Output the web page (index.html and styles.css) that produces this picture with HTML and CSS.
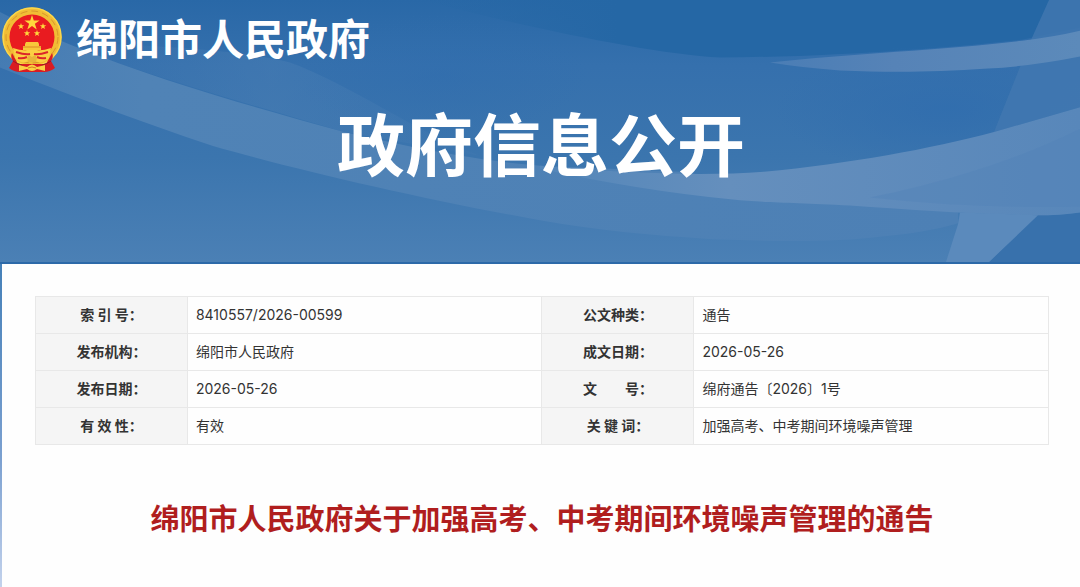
FILE: index.html
```html
<!DOCTYPE html>
<html lang="zh-CN">
<head>
<meta charset="utf-8">
<meta name="viewport" content="width=device-width, initial-scale=1">
<title>绵阳市人民政府 政府信息公开</title>
<link rel="stylesheet" href="styles.css">
</head>
<body>
<header class="banner">
  <svg class="banner-art" viewBox="0 0 1080 264" preserveAspectRatio="none" aria-hidden="true">
    <defs>
      <linearGradient id="sky" x1="0" y1="0" x2="0" y2="1">
        <stop offset="0" stop-color="#2968a7"/>
        <stop offset=".25" stop-color="#3570ad"/>
        <stop offset=".6" stop-color="#3b75ae"/>
        <stop offset="1" stop-color="#4b80b5"/>
      </linearGradient>
      <linearGradient id="deep" x1="0" y1="0" x2="1" y2="0">
        <stop offset="0" stop-color="#2567a5" stop-opacity="0"/>
        <stop offset=".3" stop-color="#2567a5"/>
      </linearGradient>
      <linearGradient id="band" x1="0" y1="0" x2="1" y2="0">
        <stop offset="0" stop-color="#5587b9" stop-opacity=".5"/>
        <stop offset=".15" stop-color="#5083b6"/>
        <stop offset="1" stop-color="#4d80b5"/>
      </linearGradient>
      <linearGradient id="sweep" x1="0" y1="0" x2="1" y2="0">
        <stop offset="0" stop-color="#5386b9"/>
        <stop offset=".35" stop-color="#658fbd"/>
        <stop offset="1" stop-color="#5887ba"/>
      </linearGradient>
      <linearGradient id="ribbon" x1="0" y1="0" x2="1" y2="0">
        <stop offset="0" stop-color="#4a7db5"/>
        <stop offset=".4" stop-color="#5683b7"/>
        <stop offset="1" stop-color="#5c8aba"/>
      </linearGradient>
      <radialGradient id="pool">
        <stop offset="0" stop-color="#306dae"/>
        <stop offset="1" stop-color="#306dae" stop-opacity="0"/>
      </radialGradient>
      <linearGradient id="glow" x1="0" y1="0" x2="1" y2="0">
        <stop offset="0" stop-color="#4d80b5" stop-opacity="0"/>
        <stop offset=".5" stop-color="#4d80b5" stop-opacity=".7"/>
        <stop offset="1" stop-color="#4d80b5" stop-opacity=".2"/>
      </linearGradient>
    </defs>
    <rect width="1080" height="264" fill="url(#sky)"/>
    <path d="M420 0C530 28 650 54 720 58C840 57 950 48 1022 40L1080 28V0Z" fill="url(#deep)"/>
    <ellipse cx="945" cy="110" rx="170" ry="65" fill="url(#pool)" opacity=".8"/>
    <ellipse cx="440" cy="75" rx="150" ry="60" fill="url(#pool)" opacity=".5"/>
    <path d="M62 43C150 45 240 50 290 63C350 85 410 130 480 157L344 133C241 103 138 72 62 43Z" fill="url(#glow)" opacity=".6"/>
    <path d="M0 12C90 60 210 96 344 133C430 153 490 163 540 167L680 173L958 214L958 225C934 232 910 236 884 238C830 245 770 243 712 241C650 237 595 232 540 222C420 200 300 172 213 147C138 122 60 92 0 68Z" fill="url(#band)"/>
    <path d="M1049 0L1032 38L1019 70L994 133L1080 108V0Z" fill="#4278b0" opacity=".8"/>
    <path d="M770 63C850 54 950 50 1022 41Q1055 37 1080 31V57Q1030 67 988 69C930 73 890 73 840 71Q800 68 770 63Z" fill="url(#ribbon)"/>
    <path d="M1036 217Q1060 217 1080 214V264H989Z" fill="#3871ac"/>
    <path d="M540 167C620 174 700 178 764 173C850 165 930 150 994 133L1080 108V214Q1060 217 1036 217C970 216 910 211 850 207C790 204 760 204 733 201Q640 192 540 170Z" fill="url(#sweep)"/>
    <path d="M870 199C930 187 1010 165 1080 130V208Q980 211 870 199Z" fill="#5182b8" opacity=".35"/>
    <path d="M960 214L1038 217L989 264H946L958 226Z" fill="#5b8abc"/>
  </svg>
  <a class="brand" href="#">
    <svg class="emblem" viewBox="0 0 60 66" aria-hidden="true">
      <circle cx="30" cy="30" r="26" fill="#e91b20" stroke="#f1bd35" stroke-width="7"/>
      <circle cx="30" cy="30" r="29" fill="none" stroke="#fbd64a" stroke-width="1.500"/>
      <circle cx="30" cy="30" r="26" fill="none" stroke="#d9962c" stroke-width="1" stroke-dasharray="7 4"/>
      <path d="M10 46Q8 50 11 54L7 61Q12 65 18 65H42Q48 65 53 61L49 54Q52 50 50 46L44 57H16Z" fill="#d91c22"/>
      <path d="M11 54Q15 57 20 58L18 64M49 54Q45 57 40 58L42 64" fill="none" stroke="#9f1824" stroke-width="1"/>
      <path d="M30 8L31.800 13.400H37.600L32.900 16.800L34.700 22.400L30 19L25.300 22.400L27.100 16.800L22.400 13.400H28.200Z" fill="#ffd83c"/>
      <g fill="#ffd83c">
        <path id="star" d="M19 16L19.800 18.300H22.200L20.300 19.800L21 22.100L19 20.700L17 22.100L17.700 19.800L15.800 18.300H18.200Z"/>
        <use href="#star" x="22"/>
        <use href="#star" x="6" y="7"/>
        <use href="#star" x="16" y="7"/>
      </g>
      <path d="M23 37L24 35H36L37 37V39H39V43H21V39H23Z" fill="#f8c83b"/>
      <path d="M21 40H39" stroke="#dc8a25" stroke-width="1"/>
      <path d="M11 41Q20 44 25 43H35Q40 44 49 41L47 51Q42 56 36 55Q30 52 24 55Q18 56 13 51Z" fill="#fbcf43"/>
      <path d="M14 45Q23 48 28 47M46 45Q37 48 32 47M16 51Q21 52 25 50M44 51Q39 52 35 50" fill="none" stroke="#dc252a" stroke-width="2"/>
      <path d="M25 51L27 48L30 50L33 48L35 51L34 55H26Z" fill="#e9b43a"/>
      <path d="M17 58L25 60Q30 55 35 60L43 58V64L35 62Q30 66 25 62L17 64Z" fill="#fbcf43"/>
      <path d="M26 61Q30 59 34 61" fill="none" stroke="#da7a22" stroke-width="1"/>
    </svg>
    <span class="brand-name">绵阳市人民政府</span>
  </a>
  <p class="banner-title">政府信息公开</p>
</header>
<main class="sheet">
  <table class="meta">
    <tbody>
      <tr><th scope="row">索 引 号：</th><td>8410557/2026-00599</td><th scope="row">公文种类：</th><td>通告</td></tr>
      <tr><th scope="row">发布机构：</th><td>绵阳市人民政府</td><th scope="row">成文日期：</th><td>2026-05-26</td></tr>
      <tr><th scope="row">发布日期：</th><td>2026-05-26</td><th scope="row">文　　号：</th><td>绵府通告〔2026〕1号</td></tr>
      <tr><th scope="row">有 效 性：</th><td>有效</td><th scope="row">关 键 词：</th><td>加强高考、中考期间环境噪声管理</td></tr>
    </tbody>
  </table>
  <h1 class="headline">绵阳市人民政府关于加强高考、中考期间环境噪声管理的通告</h1>
</main>
</body>
</html>
```
FILE: styles.css
```css
* {
  box-sizing: border-box;
}

body {
  margin: 0;
  min-height: 100vh;
  display: flex;
  flex-direction: column;
  background: linear-gradient(#4580b8 45%, #7ba0d0 78%, #c3d2ec);
  color: #333;
  font-family: Inter, "Noto Sans CJK SC", sans-serif;
  font-size: 14px;
}

.banner {
  position: relative;
  padding: 7px 0 78px 2px;
  border-bottom: 2px solid #2c69a8;
  color: #fff;
  font-family: "Noto Sans CJK SC", sans-serif;
}

.banner-art {
  position: absolute;
  inset: 0;
  width: 100%;
  height: 100%;
}

.brand {
  position: relative;
  display: flex;
  align-items: flex-start;
  gap: 14px;
  color: inherit;
  text-decoration: none;
}

.emblem {
  width: 60px;
  height: 66px;
}

.brand-name {
  font-size: 42px;
  font-weight: 700;
  line-height: 60px;
}

.banner-title {
  position: relative;
  margin: 27px 0 0;
  font-size: 68px;
  font-weight: 700;
  line-height: 84px;
  text-align: center;
}

.sheet {
  flex: 1;
  margin-left: 2px;
  padding: 32px 31px 40px 33px;
  background: #fefefe;
}

.meta {
  width: 100%;
  table-layout: fixed;
  border-collapse: collapse;
}

.meta th,
.meta td {
  height: 37px;
  padding: 0 8px;
  border: 1px solid #e8e8e8;
  line-height: 20px;
}

.meta th {
  width: 15%;
  background: #f5f5f5;
  font-weight: 700;
  text-align: center;
}

.meta td {
  width: 35%;
  text-align: left;
}

.headline {
  margin: 55px 0 0;
  color: #b01e1e;
  font-size: 29px;
  font-weight: 700;
  line-height: 40px;
  text-align: center;
}
```
